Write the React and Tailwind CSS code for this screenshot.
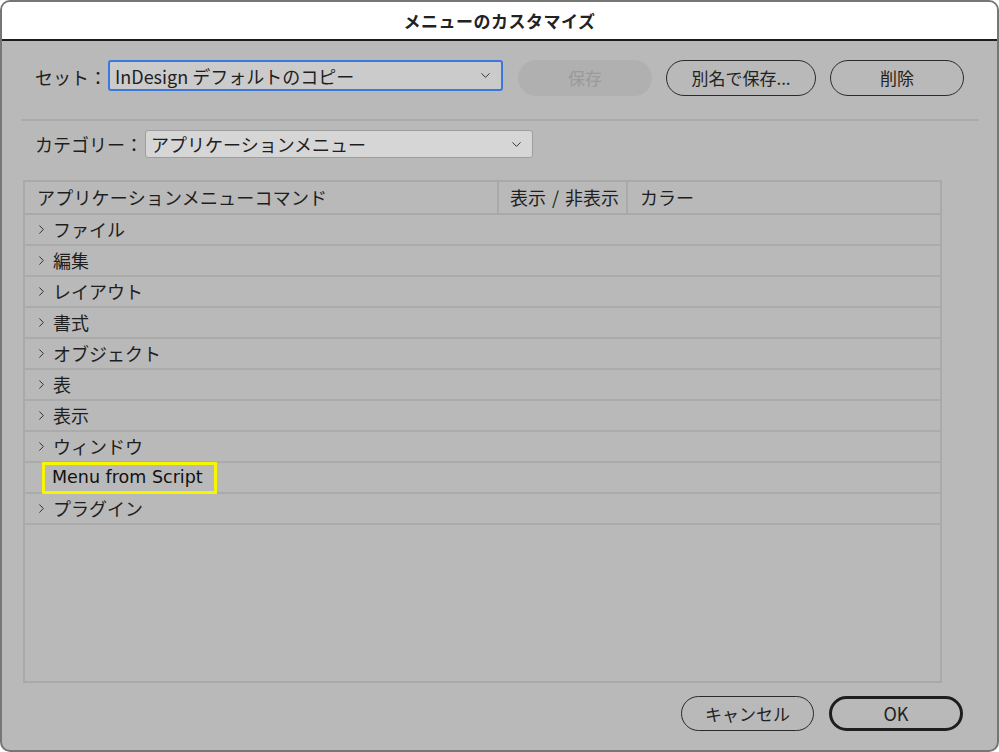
import { ChevronDown, ChevronRight } from "lucide-react";

const font = { fontFamily: '"Noto Sans CJK JP", "Noto Sans", sans-serif' };

const rows = [
  { label: "ファイル" },
  { label: "編集" },
  { label: "レイアウト" },
  { label: "書式" },
  { label: "オブジェクト" },
  { label: "表" },
  { label: "表示" },
  { label: "ウィンドウ" },
  { label: "Menu from Script", leaf: true },
  { label: "プラグイン" },
];

const PillButton = ({ children, className = "" }) => (
  <button
    className={`h-[35px] rounded-full border-[1.5px] border-[#2a2a2a] text-[17px] text-[#222] flex items-center justify-center ${className}`}
  >
    {children}
  </button>
);

const Select = ({ value, className = "" }) => (
  <div
    className={`flex items-center justify-between rounded-[3px] pl-[5px] pr-[8px] text-[18px] text-[#1e1e1e] ${className}`}
  >
    <span className="leading-none">{value}</span>
    <ChevronDown size={15} strokeWidth={1.6} className="text-[#333]" />
  </div>
);

export default function App() {
  return (
    <div className="w-[999px] h-[752px] bg-white" style={font}>
      <div className="w-full h-full rounded-[10px] border-2 border-[#767676] overflow-hidden flex flex-col bg-[#b9b9b9]">
        {/* title bar */}
        <div className="h-[39px] shrink-0 bg-white border-b-2 border-[#1c1c1c] flex items-center justify-center">
          <span className="text-[17px] font-bold text-[#222] tracking-[0.5px]">メニューのカスタマイズ</span>
        </div>

        <div className="flex-1 flex flex-col pl-[19px] pr-[19px]">
          {/* set row */}
          <div className="flex items-start mt-[19px] h-[37px]">
            <span className="ml-[14px] mt-[4px] w-[73px] text-[18px] text-[#1e1e1e]">セット：</span>
            <Select
              value="InDesign デフォルトのコピー"
              className="w-[395px] h-[31px] bg-[#cbcbcb] border-2 border-[#3a78e0]"
            />
            <button className="ml-[15px] w-[134px] h-[36px] rounded-full bg-[#b0b0b0] text-[17px] text-[#9a9a9a]">
              保存
            </button>
            <PillButton className="ml-[14px] w-[150px] h-[36px]">別名で保存...</PillButton>
            <PillButton className="ml-[14px] w-[134px] h-[36px]">削除</PillButton>
          </div>

          {/* separator */}
          <div className="mt-[22px] h-[2px] bg-[#ababab] w-[958px]" />

          {/* category row */}
          <div className="flex items-center mt-[9px] h-[28px]">
            <span className="ml-[14px] w-[110px] text-[18px] text-[#1e1e1e]">カテゴリー：</span>
            <Select
              value="アプリケーションメニュー"
              className="w-[388px] h-[28px] bg-[#d6d6d6] border border-[#9e9e9e]"
            />
          </div>

          {/* table */}
          <div className="mt-[22px] ml-[2px] w-[919px] h-[503px] border-2 border-[#a9a9a9] flex flex-col">
            <div className="h-[33px] shrink-0 flex border-b-2 border-[#a9a9a9] text-[18px] text-[#1e1e1e]">
              <div className="w-[474px] border-r-2 border-[#a9a9a9] pl-[12px] flex items-center tracking-[0.2px]">
                アプリケーションメニューコマンド
              </div>
              <div className="w-[129px] border-r-2 border-[#a9a9a9] pl-[11px] flex items-center">
                表示<span className="mx-[6px]">/</span>非表示
              </div>
              <div className="flex-1 pl-[12px] flex items-center">カラー</div>
            </div>
            {rows.map((r) => (
              <div
                key={r.label}
                className="h-[31px] shrink-0 flex items-center border-b-2 border-[#ababab] text-[18px] text-[#1e1e1e]"
              >
                {r.leaf ? (
                  <div className="ml-[17px] h-[32px] w-[175px] border-[3px] border-[#f8f500] flex items-center pl-[7px]">
                    <span className="text-[17.5px] text-[#111]" style={{ fontFamily: '"DejaVu Sans", sans-serif' }}>
                      {r.label}
                    </span>
                  </div>
                ) : (
                  <>
                    <ChevronRight size={15} strokeWidth={1.6} className="ml-[9px] text-[#333]" />
                    <span className="ml-[4px]">{r.label}</span>
                  </>
                )}
              </div>
            ))}
          </div>

          {/* bottom buttons */}
          <div className="flex justify-end mt-[13px] mr-[15px]">
            <PillButton className="w-[133px] h-[35px]">キャンセル</PillButton>
            <button className="ml-[15px] w-[134px] h-[35px] rounded-full border-[3px] border-[#1e1e1e] text-[18px] text-[#222] flex items-center justify-center">
              OK
            </button>
          </div>
        </div>
      </div>
    </div>
  );
}
